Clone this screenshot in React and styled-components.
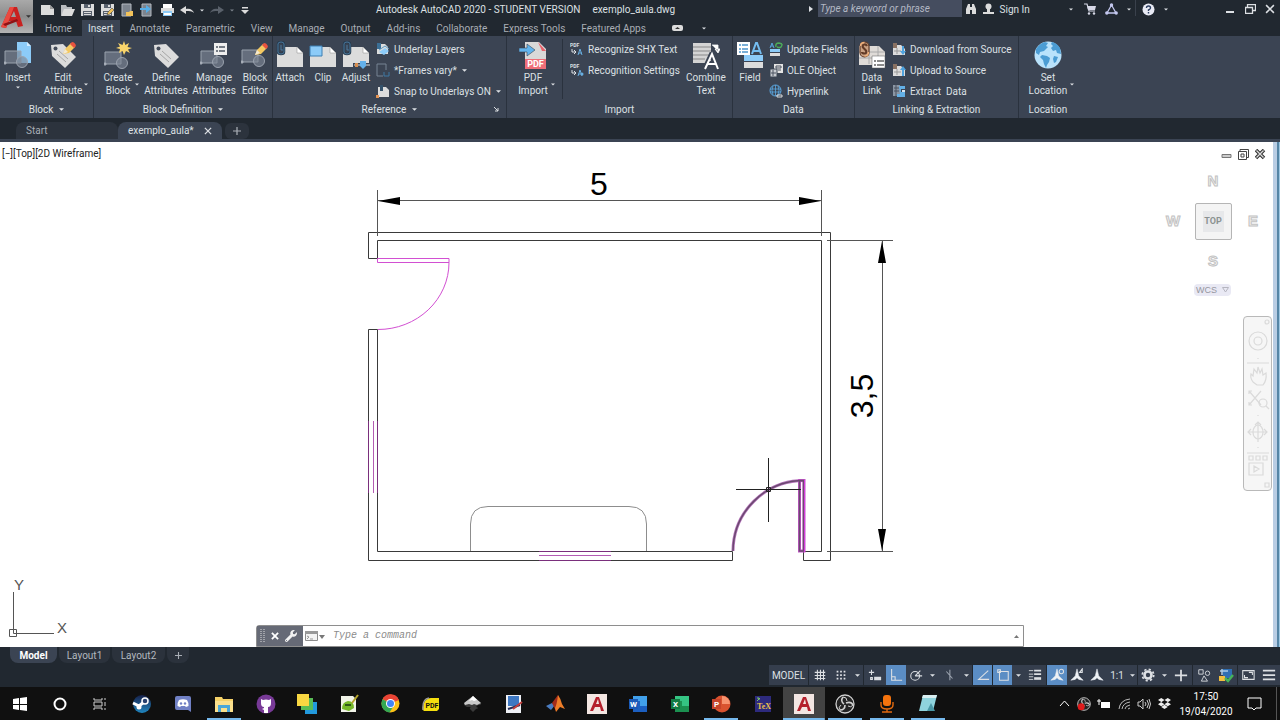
import React from "react";
import styled, { createGlobalStyle, css } from "styled-components";
import { FaGithub, FaDropbox, FaWrench } from "react-icons/fa";

const c = {
  dark: "#212830",
  panel: "#3b4453",
  line: "#2a323e",
  text: "#dde0e4",
  dim: "#a9aeb5",
  grey: "#dcdcdc",
  blue: "#8ccbf8",
  active: "#5b8dc4",
  magenta: "#d24fd2",
};

const GlobalStyle = createGlobalStyle`
  *, *::before, *::after { box-sizing: border-box; }
  body { margin: 0; background: ${c.dark}; }
  button, input { font: inherit; color: inherit; border: 0; padding: 0; margin: 0; background: none; }
  a { color: inherit; text-decoration: none; }
  svg { display: block; flex: none; }
`;

const Shell = styled.div`
  display: flex;
  flex-direction: column;
  min-height: 100vh;
  font-family: Roboto, "Open Sans", sans-serif;
  font-size: 10px;
  line-height: 13px;
  color: ${c.text};
  white-space: nowrap;
`;

/* ---------- header ---------- */
const Header = styled.header`
  display: flex;
  height: 36px;
  background: ${c.dark};
`;
const AppButton = styled.button`
  display: flex;
  align-items: center;
  width: 33px;
  height: 33px;
  background: linear-gradient(#a9a9a9, #8b8b8b 50%, #b4b4b4);
`;
const HeaderRows = styled.div`
  flex: 1;
  display: flex;
  flex-direction: column;
`;
const TitleBar = styled.div`
  display: grid;
  grid-template-columns: 343px 1fr 477px;
  height: 20px;
`;
const QuickAccess = styled.div`
  display: flex;
  align-items: center;
  padding-left: 4px;
`;
const ToolButton = styled.button`
  display: flex;
  align-items: center;
  justify-content: center;
  flex: none;
  width: ${(p) => p.$w || 20}px;
  height: ${(p) => p.$h || 18}px;
`;
const WindowTitle = styled.h1`
  display: flex;
  gap: 12px;
  margin: 0;
  font-size: 10px;
  font-weight: 400;
  line-height: 20px;
`;
const TitleRight = styled.div`
  display: flex;
  justify-content: flex-end;
  align-items: flex-start;
`;
const WindowButtons = styled.div`
  display: flex;
  margin-left: 48px;
`;
const Search = styled.input`
  width: 148px;
  height: 17px;
  padding: 0 2px;
  margin-right: 1px;
  background: #454d5f;
  font-style: italic;
  border-radius: 0;
  &::placeholder { color: #b3b8c4; opacity: 1; }
`;
const SignIn = styled.button`
  display: flex;
  align-items: center;
  gap: 6px;
  height: 18px;
  width: 84px;
  padding-left: 4px;
`;
const Divider = styled.span`
  width: 1px;
  height: 16px;
  background: #3a414c;
`;
const RibbonTabs = styled.nav`
  display: flex;
  height: 16px;
  padding-left: 4px;
`;
const RibbonTab = styled.a`
  padding: 0 8px;
  line-height: 17px;
  color: ${c.dim};
  ${(p) => p.$on && css`
    padding: 0 6px;
    margin: 0 2px;
    background: ${c.panel};
    color: ${c.text};
  `}
`;

/* ---------- ribbon ---------- */
const Ribbon = styled.section`
  display: flex;
  height: 82px;
  background: ${c.panel};
`;
const Panel = styled.section`
  display: flex;
  flex-direction: column;
  flex: ${(p) => (p.$w ? `0 0 ${p.$w}px` : "1")};
  border-right: ${(p) => (p.$w ? `1px solid ${c.line}` : "0")};
`;
const PanelBody = styled.div`
  display: flex;
  height: 66px;
  padding-top: 3px;
`;
const PanelTitle = styled.div`
  display: flex;
  align-items: center;
  justify-content: center;
  gap: 6px;
  height: 17px;
  width: ${(p) => (p.$w ? `${p.$w}px` : "auto")};
`;
const SplitTitle = styled(PanelTitle)`
  display: grid;
  grid-template-columns: 1fr auto auto 1fr;
`;
const Launcher = styled.button`
  justify-self: end;
  width: 12px;
  height: 5px;
`;
const BigBtn = styled.button`
  display: flex;
  flex-direction: column;
  align-items: center;
  flex: none;
  width: ${(p) => p.$w}px;
  line-height: 13px;
  & > svg { margin-top: 2px; }
`;
const BigIcon = styled.span`
  display: grid;
  place-items: center;
  height: 32px;
`;
const BigLabel = styled.span`
  display: grid;
  grid-template-columns: 1fr auto 1fr;
  align-items: center;
  width: 100%;
  text-align: center;
  white-space: pre-line;
  & > span { grid-column: 2; }
  & > svg { justify-self: center; }
`;
const SmallCol = styled.div`
  display: flex;
  flex-direction: column;
  gap: 1px;
  padding-left: ${(p) => p.$pad || 4}px;
`;
const SmallBtn = styled.button`
  display: flex;
  align-items: center;
  gap: 4px;
  height: 20px;
  & > svg:last-child { margin-left: 1px; }
`;
const InnerRule = styled.span`
  width: 1px;
  height: 60px;
  background: ${c.line};
  margin-left: 3px;
`;

/* ---------- document tabs ---------- */
const DocTabs = styled.nav`
  display: flex;
  align-items: flex-end;
  height: 24px;
  padding-left: 16px;
  border-bottom: 3px solid ${c.panel};
`;
const DocTab = styled.a`
  display: flex;
  align-items: center;
  gap: 10px;
  width: ${(p) => p.$w}px;
  height: 17px;
  padding-left: 10px;
  border-radius: 8px 8px 0 0;
  color: ${(p) => (p.$on ? c.text : c.dim)};
  background: ${(p) => (p.$on ? c.panel : "#2c333d")};
`;
const AddTab = styled.button`
  width: 24px;
  height: 16px;
  margin-left: 3px;
  border-radius: 6px;
  background: #2c333d;
  display: grid;
  place-items: center;
`;

/* ---------- drawing area ---------- */
const Canvas = styled.main`
  position: relative;
  flex: 1;
  background: #fff;
  color: #222;
`;
const Drawing = styled.svg`
  width: 100%;
  height: auto;
`;
const ViewLabel = styled.div`
  position: absolute;
  top: 5px;
  left: 2px;
`;
const EdgeStrip = styled.div`
  position: absolute;
  inset: 0 0 0 auto;
  width: 7px;
  background: linear-gradient(90deg, #b9cde4 0 4px, #5585a6 4px 6px, #9cc6e2 6px);
`;
const DocControls = styled.div`
  position: absolute;
  top: 5px;
  right: 12px;
  display: flex;
  gap: 1px;
`;
const ViewCube = styled.div`
  position: absolute;
  top: 19px;
  right: 7px;
  display: grid;
  grid-template: repeat(3, 40px) / repeat(3, 40px);
  place-items: center;
`;
const Compass = styled.button`
  grid-area: ${(p) => p.$area};
  font: 700 15px/18px "Liberation Sans", sans-serif;
  color: #f3f3f3;
  -webkit-text-stroke: 1px #c2c2c2;
`;
const CubeFace = styled.button`
  grid-area: 2 / 2;
  width: 37px;
  height: 37px;
  border: 1px solid #b5b5b5;
  border-radius: 2px;
  background: #f1f1f1;
  box-shadow: inset 0 0 0 7px #f4f4f4, inset 0 0 0 20px #e7e8ea;
  font-weight: 700;
  font-size: 9px;
  color: #8b9291;
`;
const Wcs = styled.button`
  position: absolute;
  top: 142px;
  right: 49px;
  display: flex;
  align-items: center;
  justify-content: center;
  gap: 5px;
  width: 37px;
  height: 12px;
  border-radius: 4px;
  background: #e9e9f4;
  font: 9px/12px "Liberation Sans", sans-serif;
  color: #96969f;
`;
const NavBar = styled.div`
  position: absolute;
  top: 174px;
  right: 8px;
  width: 29px;
  height: 175px;
  border: 1px solid #b9b9b9;
  border-radius: 4px;
  background: #f6f6f6;
`;
const CommandLine = styled.form`
  position: absolute;
  left: 20%;
  bottom: 0;
  width: 60%;
  height: 22px;
  display: flex;
  border: 1px solid #8e8e8e;
  border-radius: 3px 0 0 0;
  background: #fff;
`;
const CommandHandle = styled.div`
  display: flex;
  align-items: center;
  gap: 6px;
  width: 46px;
  padding-left: 3px;
  background: #666a76;
`;
const CommandInput = styled.input`
  flex: 1;
  font: italic 10px/20px "Liberation Mono", monospace;
  padding-left: 6px;
  &::placeholder { color: #8c8c8c; opacity: 1; }
`;
const PlainButton = styled.button`
  display: grid;
  place-items: center;
`;

/* ---------- bottom bars ---------- */
const LayoutTabs = styled.nav`
  display: flex;
  height: 18px;
  padding-left: 10px;
  background: ${c.dark};
`;
const LayoutTab = styled.a`
  display: flex;
  align-items: center;
  justify-content: center;
  width: ${(p) => p.$w}px;
  height: 16px;
  margin-right: 2px;
  border-radius: 0 0 8px 8px;
  color: ${(p) => (p.$on ? "#fff" : "#b3b8bf")};
  font-weight: ${(p) => (p.$on ? 700 : 400)};
  background: ${(p) => (p.$on ? c.panel : "#2b323c")};
`;
const StatusBar = styled.div`
  display: flex;
  justify-content: flex-end;
  gap: 1px;
  height: 22px;
  background: ${c.dark};
`;
const StatusGroup = styled.div`
  display: flex;
  align-items: center;
  height: 20px;
  background: #353e4d;
`;
const StatusBtn = styled.button`
  display: grid;
  place-items: center;
  width: ${(p) => p.$w || 20}px;
  height: 20px;
  color: ${c.text};
  background: ${(p) => (p.$on ? c.active : "transparent")};
`;
const Taskbar = styled.footer`
  display: flex;
  height: 33px;
  background: #101010;
  color: #fff;
`;
const SystemButtons = styled.div`
  display: grid;
  grid-template-columns: repeat(3, 40px);
`;
const Apps = styled.div`
  display: grid;
  grid-template-columns: repeat(20, 1fr);
  flex: 0 1 828px;
  margin-left: 1px;
`;
const TaskBtn = styled.button`
  display: grid;
  place-items: center;
  height: 33px;
  background: ${(p) => (p.$focus ? "#434343" : "transparent")};
  ${(p) => p.$open && css`
    background-image: linear-gradient(#76b9ed, #76b9ed);
    background-size: ${p.$focus ? "100%" : "34px"} 2px;
    background-position: bottom;
    background-repeat: no-repeat;
  `}
`;
const Tray = styled.div`
  display: flex;
  align-items: center;
  margin-left: auto;
`;
const Clock = styled.button`
  width: 64px;
  line-height: 15px;
  text-align: center;
`;
const PeekEdge = styled.span`
  width: 1px;
  height: 33px;
  margin-left: 6px;
  margin-right: 3px;
  background: #555;
`;

/* ---------- icons ---------- */
const Svg = ({ w = 16, h = w, vb, children, ...rest }) => (
  <svg width={w} height={h} viewBox={vb || `0 0 ${w} ${h}`} fill="none" {...rest}>{children}</svg>
);
const Caret = ({ s = 5, color = c.text }) => (
  <Svg w={s} h={3} vb="0 0 6 3"><path d="M0 0h6L3 3z" fill={color} /></Svg>
);
const Close = ({ s = 9, color = c.text, sw = 1.4 }) => (
  <Svg w={s} vb="0 0 9 9"><path d="M1 1l7 7M8 1L1 8" stroke={color} strokeWidth={sw} /></Svg>
);
const Plus = ({ s = 9, sw = 1.4, color = c.dim }) => (
  <Svg w={s} vb="0 0 9 9"><path d="M4.500 0v9M0 4.500h9" stroke={color} strokeWidth={sw} /></Svg>
);
const RedA = () => (
  <Svg w={26} h={24}>
    <path d="M1 22L10 2h7l6 19-5 1-2-6H9l-3 7z" fill="#c9211f" />
    <path d="M10 2h4L6 23l-5-1z" fill="#ea4a40" />
    <path d="M11 12l3-6 2 6z" fill="#9c9c9c" />
    <path d="M3 19l14-5 1 2-13 5z" fill="#8f1215" />
  </Svg>
);
const PageIcon = () => <Svg w={15} h={12}><path d="M1 1h9l4 4v6H1z" fill={c.grey} /><path d="M10 1v4h4z" fill="#9a9a9a" /></Svg>;
const FolderIcon = () => (
  <Svg w={15} h={13}><path d="M1 12V1h5l1 2h5v3H5z" fill="#b9bcc0" /><path d="M4 5h11l-3 7H1z" fill={c.grey} /></Svg>
);
const SaveIcon = ({ pencil }) => (
  <Svg w={15} h={14}>
    <path d="M1 1h13v12H1z" fill={c.grey} />
    <path d="M4 1h7v4H4zM3 8h9v5H3z" fill="#59616d" />
    <path d="M4 9h7v1H4zM4 11h7v1H4zM8 2h2v2H8z" fill={c.grey} />
    {pencil && <path d="M7 12l1-3 4-4 2 2-4 4z" fill="#f2c35b" stroke="#30353d" strokeWidth=".5" />}
  </Svg>
);
const WebFileIcon = ({ out }) => (
  <Svg w={14}>
    <path d="M2 1h9v12H2z" fill="#7c848e" stroke="#b5bac1" />
    {out ? <path d="M0 5h6V2l5 4-5 4V7H0z" fill="#56aee8" /> : <path d="M6 9h3l1-1h3v5H6z" fill="#f2c35b" />}
  </Svg>
);
const PrintIcon = () => (
  <Svg w={15} h={14}>
    <path d="M3 1h9v4H3z" fill="#fff" /><path d="M1 5h13v5H1z" fill={c.grey} /><path d="M3 8h9v5H3z" fill="#8ccbf8" />
    <path d="M4 10h7v2H4z" fill="#fff" />
  </Svg>
);
const UndoIcon = ({ flip, color }) => (
  <Svg w={14} h={10}>
    <path d={flip ? "M14 5L8 1v3c-4-1-7 1-8 4 2-2 5-2 8-2v3z" : "M0 5l6-4v3c4-1 7 1 8 4-2-2-5-2-8-2v3z"} fill={color} />
  </Svg>
);
const Shapes = ({ x = 1, y = 10 }) => (
  <g stroke="#9aa2ae" strokeWidth="1" fill="#7d8694" fillOpacity=".65">
    <path d={`M${x} ${y}h16v12H${x}z`} /><circle cx={x + 17} cy={y + 11} r="5.500" />
    <path d={`M${x - 1} ${y + 11}h2v2h-2z`} fill="#fff" />
  </g>
);
const Pencil = ({ x = 0, y = 0 }) => (
  <g transform={`translate(${x} ${y})`}>
    <path d="M0 12l2-5 6-6 4 4-6 6z" fill="#f4c962" /><path d="M7 2l2-2q3 0 4 4l-2 2z" fill="#e8533f" /><path d="M0 12l2-5 3 3z" fill="#f3e9d2" />
  </g>
);
const Tag = () => (
  <g>
    <path d="M2 4l12-1 13 13-11 11L3 15z" fill={c.grey} /><circle cx="6.500" cy="7.500" r="2" fill="#434b59" />
    <path d="M10 10l9 8M8 13l9 8" stroke="#a5a5a5" />
  </g>
);
const Sheet = () => <g><path d="M1 6h20l6 6v14H1z" fill={c.grey} /><path d="M21 6v6h6z" fill="#fff" stroke="#8b8b8b" strokeWidth=".5" /></g>;
const Clip = () => (
  <g>
    <path d="M2 3q0-2 3-2t3 2v8q0 2-3 2t-3-2z" fill="#3b4453" stroke="#26394c" strokeWidth="2.500" />
    <path d="M2 3q0-2 3-2t3 2v8q0 2-3 2t-3-2zM5 4v5h2" stroke="#4f7fa6" strokeWidth=".9" />
  </g>
);
const InsertI = () => <Svg w={28}><path d="M13 1h10l4 4v17H13z" fill={c.blue} /><path d="M23 1v4h4z" fill="#d5edff" /><Shapes x={1} y={10} /></Svg>;
const EditAttrI = () => <Svg w={28}><Tag /><Pencil x={14} y={1} /></Svg>;
const CreateI = () => (
  <Svg w={28}><Shapes y={11} />
    <path d="M20 0l1.300 4L25 2l-1.500 4L28 7l-4 1.500L26 12l-4-2-2 4-1.500-4L15 12l1-4-4-1 4-1.500L14 2l4.500 2z" fill="#f8d46b" /></Svg>
);
const TagI = () => <Svg w={28}><Tag /></Svg>;
const ManageI = () => (
  <Svg w={28}><Shapes y={10} /><path d="M14 2h13v12H14z" fill="#eee" /><path d="M16 6h2m1 0h6M16 10h2m1 0h6" stroke="#4c5562" strokeWidth="1.500" /></Svg>
);
const EditorI = () => <Svg w={28}><Shapes y={9} /><Pencil x={14} y={2} /></Svg>;
const AttachI = () => <Svg w={28}><Sheet /><Clip /></Svg>;
const ClipI = () => <Svg w={28} h={28}><Sheet /><path d="M1 5h12v10H1z" fill={c.blue} stroke="#3c7fb3" /></Svg>;
const AdjustI = () => (
  <Svg w={28}><Sheet /><Clip /><path d="M11 24h17" stroke="#3b4453" strokeWidth="4" /><path d="M12 24h16" stroke="#dcdcdc" /><path d="M18 20h6v5l-3 3-3-3z" fill="#63b0ea" /><path d="M13 22h3v4h-3z" fill="#d88d4e" /></Svg>
);
const PdfI = () => (
  <Svg w={28} h={29}>
    <path d="M6 1h14l7 7v20H6z" fill="#d9d9d9" /><path d="M19 1l8 9h-4z" fill="#e8626b" /><path d="M6 18h21v10H6z" fill="#ef6e78" />
    <text x="16.500" y="26" fontSize="9" fontWeight="700" textAnchor="middle" fill="#fff">PDF</text>
    <path d="M0 7h8V3l8 6-8 6v-4H0z" fill="#62b4ee" stroke="#3b4453" strokeWidth=".6" />
  </Svg>
);
const CombineI = () => (
  <Svg w={28} h={29}>
    <path d="M1 2h18v20H1z" fill="#d4d4d4" /><path d="M1 6h18M1 10h18M1 14h18M1 18h12" stroke="#888" />
    <path d="M20 4h6v6M23 8l3 4 2-4z" stroke="#fff" fill="#fff" strokeWidth=".8" />
    <path d="M12 28l7-15h2l6 15M15 22h10" stroke="#3b4453" strokeWidth="4" /><path d="M13 28l7-15 6 15M15 23h9" stroke="#fff" strokeWidth="2" />
  </Svg>
);
const FieldI = () => (
  <Svg w={28}>
    <path d="M1 1h13v13H1z" fill="#fff" /><path d="M3 4h2m1 0h6M3 8h2m1 0h6M3 11h2m1 0h6" stroke="#4d95cc" strokeWidth="1.400" />
    <path d="M16 13l4-11h1l4 11M17 10h7" stroke="#74bdf1" strokeWidth="2" /><path d="M8 14h19v6H8z" fill={c.blue} /><path d="M8 21h19v6H8z" fill={c.grey} />
  </Svg>
);
const DataLinkI = () => (
  <Svg w={28}>
    <path d="M1 5h20l6 6v13H1z" fill="#dfdbd7" /><path d="M1 11h26M1 17h14M11 5v18M20 5v12" stroke="#aaa" />
    <path d="M14 15h13v12H14z" fill="#fff" stroke="#555" strokeWidth=".5" /><path d="M16 20h2m1 0h7M16 24h2m1 0h7" stroke="#666" strokeWidth="1.300" />
    <rect x="2" y="1" width="9" height="15" rx="4.500" fill="#c9a183" stroke="#633b26" strokeWidth="1.200" />
    <path d="M9 5q-1-2-3-1.500t-1 3l3 3q1 3-1.500 3T4 11" stroke="#633b26" strokeWidth="2.200" />
    <path d="M2.500 5q0-3.500 4-3.500M10.500 11q0 4-4 4" stroke="#f0b07a" strokeWidth="1.400" />
  </Svg>
);
const GlobeI = () => (
  <Svg w={28}>
    <circle cx="14" cy="14" r="13.500" fill="#b9e2fb" />
    <path d="M2 8q4-6 9-7l3 1-2 3 2 1-4 4-4 1-1 3-3-2zM18 1q5 1 8 6l1 6-4-1-1-3-3 1-2-3 2-2-2-2zM8 14l5 1 3 2-1 4-2 3-1 3-2-4-1-4-3-3zM20 15l4 1-2 5-2 1-1-4z" fill="#4b9cd3" />
  </Svg>
);
const LayersI = () => <Svg w={14}><path d="M1 2h8l3 3v7H1z" fill={c.grey} /><path d="M1 1h4v6H1z" fill="#3b6f96" /><path d="M3 10l6-4 4 3-5 4z" fill={c.blue} /><path d="M3 8l6-4 4 3" stroke="#5a9ac5" /></Svg>;
const FramesI = () => <Svg w={14}><path d="M10 7V1H1v12h6" stroke="#778394" /><path d="M8 9v4h5V9" stroke="#3f79a5" /></Svg>;
const SnapI = () => <Svg w={14}><path d="M2 3h8l3 3v7H2z" fill={c.grey} /><path d="M4 1h3v6H4z" fill="#35526b" /><path d="M0 11h3v3H0z" fill="#e59352" /></Svg>;
const ShxI = ({ gear }) => (
  <Svg w={14}><text x="0" y="5" fontSize="5" fontWeight="700" fill={c.text}>PDF</text>
    <path d="M2 7v3h4M4 8l2 2-2 2" stroke={c.text} />
    <path d="M8 13l2-6 2 6M9 11h3" stroke="#68aee0" />{gear && <circle cx="12" cy="11" r="1.500" fill="#68aee0" />}</Svg>
);
const UpdateI = () => <Svg w={14}><path d="M1 6l2-5 2 5M2 4h2" stroke="#58a5dd" /><path d="M1 7h10v3H1z" fill={c.blue} /><path d="M1 11h10v3H1z" fill={c.grey} /><path d="M7 5q-1-4 3-4l3 1M13 2q0 5-5 3" stroke="#4cac5a" strokeWidth="1.500" /></Svg>;
const OleI = () => <Svg w={14}><path d="M5 1h9v9H5z" fill="#e4e4e4" /><path d="M1 6h7v8H1z" fill="#c6cad0" stroke="#3b4453" /><path d="M7 3h5v2H7zM9 7h3" stroke="#4a5361" /><path d="M2 10h5M4 7v6" stroke="#4a5361" /></Svg>;
const HyperI = () => <Svg w={14}><circle cx="6.500" cy="6.500" r="5.500" stroke="#5ba9e3" /><path d="M1 5h11M1 8h11M6.500 1v11M4 2q-2 4 0 9M9 2q2 4 0 9" stroke="#5ba9e3" strokeWidth=".8" /><path d="M8 11h5v2H8z" stroke={c.grey} /></Svg>;
const TransferI = ({ up }) => (
  <Svg w={14}><path d="M1 3h8l4 4v6H1z" fill={c.grey} /><path d="M1 1h4v5H1z" fill="#8a7263" /><path d="M2 9h7M5 6v6" stroke="#999" />
    <path d={up ? "M10 13V7H8l3-4 3 4h-2v6z" : "M10 4h2v5h2l-3 4-3-4h2z"} fill="#4fa3de" /></Svg>
);
const ExtractI = () => <Svg w={14}><path d="M1 1h7v11H1z" fill="#8b96a4" /><path d="M2 4h5M2 7h5M4 1v11" stroke="#4a5361" /><path d="M7 2h6v3H9v3h4v5H5v-3h3z" fill="#63b0e6" /><path d="M10 6h3v2h-3z" fill="#dce6ef" /></Svg>;

const Binoculars = () => <Svg w={12} h={12}><path d="M1 11V6l2-5h2v10zM7 1h2l2 5v5H7zM4 4h4v3H4z" fill={c.grey} /></Svg>;
const User = () => <Svg w={11} h={12}><circle cx="5.500" cy="3.500" r="3" fill={c.grey} /><path d="M4 5h3v4h4v2H0V9h4z" fill={c.grey} /></Svg>;
const Cart = () => <Svg w={13} h={12}><path d="M0 1h3l2 7h6" stroke="#d6d8e6" strokeWidth="1.200" /><path d="M3 3h9l-1 4H4z" fill="#d6d8e6" /><circle cx="5" cy="10.500" r="1.200" fill="#d6d8e6" /><circle cx="10" cy="10.500" r="1.200" fill="#d6d8e6" /></Svg>;
const Triad = () => <Svg w={13} h={12}><path d="M6.500 2L2 10h9z" stroke="#c4c8ef" strokeWidth="1.300" /><circle cx="6.500" cy="2" r="1.700" fill="#c4c8ef" /><circle cx="1.800" cy="10" r="1.700" fill="#c4c8ef" /><circle cx="11.200" cy="10" r="1.700" fill="#c4c8ef" /></Svg>;
const Help = () => <Svg w={13}><circle cx="6.500" cy="6.500" r="6" fill="#e8eaf4" /><path d="M4.500 5q0-2 2-2t2 2q0 1-2 2v1M6.500 9v1.500" stroke="#2b3c5f" strokeWidth="1.400" /></Svg>;

/* status bar glyphs, drawn on a 16 x 16 grid */
const statusPaths = {
  grid: <path d="M5 2v12M8.500 2v12M12 2v12M2 5h12M2 8.500h12M2 12h12" />,
  snap: <path d="M3 4h2M7 4h2M11 4h2M3 8h2M7 8h2M11 8h2M3 12h2M7 12h2M11 12h2" strokeWidth="2" />,
  infer: <g><path d="M4 2v6M1 5h6" /><path d="M7 10h8v4H7z" fill="#dde0e4" stroke="none" /><path d="M3 11h2v2H3z" /></g>,
  ortho: <path d="M3 1v13h12M3 10h4v4" />,
  polar: <g><circle cx="7" cy="9" r="5" /><path d="M7 9h8M7 9l6-6" /></g>,
  iso: <path d="M9 2v12M5 4l7 8" stroke="#9da5b1" />,
  track: <path d="M14 3L3 13h12" />,
  osnap: <path d="M4 4h10v10H4zM2 2h3v3H2z" />,
  weight: <g><path d="M1 3h5M1 7h5M1 10h5M1 13h5" strokeWidth="1" /><path d="M7 3h8M7 7h8" strokeWidth="2" /><path d="M7 12h8" strokeWidth="3" /></g>,
  anno: <path d="M8 1l2 8 5 5-5-1-2-2-2 2-5 1 5-5z" fill="#eef1f5" stroke="#eef1f5" strokeWidth=".6" />,
  custom: <path d="M8 2v13M1 8.500h14" strokeWidth="2" />,
  shapes: <g><path d="M2 2h5v5H2zM8 9l4 6H5z" strokeWidth="1" /><circle cx="12" cy="6" r="2.500" strokeWidth="1" /></g>,
  full: <path d="M2 3h13v10H2zM9 5h4v3M8 11H4V8" strokeWidth="1.200" />,
  menu: <path d="M1 3h14M1 8h14M1 13h14" strokeWidth="2" />,
};
const SI = ({ n, children }) => <Svg w={14} vb="0 0 16 16" stroke={c.text} strokeWidth="1.200">{statusPaths[n]}{children}</Svg>;
const Gear = () => (
  <Svg w={14} vb="0 0 16 16"><circle cx="8" cy="8" r="4" stroke={c.text} strokeWidth="3" /><circle cx="8" cy="8" r="6.500" stroke={c.text} strokeWidth="2" strokeDasharray="2.500 2.600" /></Svg>
);
const Performance = () => (
  <Svg w={16}><path d="M5 2h9v9H5z" fill="#2f6fb3" /><path d="M2 4h8M4 2v6" stroke="#a9cbe9" strokeWidth="1.500" /><path d="M1 9h6v5H1z" fill="#f2bf3e" /><path d="M7 11l3 3 5-6" stroke="#46b35a" strokeWidth="2.500" /></Svg>
);

/* taskbar glyphs */
const WindowsI = () => <Svg w={14}><path d="M0 2l6-1v6H0zM7 1l7-1v7H7zM0 8h6v5l-6-1zM7 8h7v6l-7-1z" fill="#fff" /></Svg>;
const CortanaI = () => <Svg w={14}><circle cx="7" cy="7" r="5.500" stroke="#fff" strokeWidth="2" /></Svg>;
const TaskViewI = () => <Svg w={14}><path d="M1 1v2h8V1M1 13v-2h8v2M1 5h8v4H1zM12 1v2M12 11v2M12 5v4" stroke="#cfcfcf" /></Svg>;
const SteamI = () => (
  <Svg w={20}><defs><linearGradient id="steam" x2="0" y2="1"><stop stopColor="#17204a" /><stop offset="1" stopColor="#1f86c0" /></linearGradient></defs>
    <circle cx="10" cy="10" r="9" fill="url(#steam)" /><path d="M1 9l6 3 5-4" stroke="#fff" strokeWidth="3" /><circle cx="13" cy="7" r="3" fill="#27406e" stroke="#fff" strokeWidth="1.500" /><circle cx="7" cy="13" r="2.500" fill="#fff" /></Svg>
);
const DiscordI = () => (
  <Svg w={18}><path d="M3 1h12q2 0 2 2v14l-3-2H3q-2 0-2-2V3q0-2 2-2z" fill="#7080c4" />
    <path d="M5 5q4-1.500 8 0 2 3 1.500 6L12 12l-1-1H7l-1 1-2.500-1Q3 8 5 5z" fill="#fff" /><circle cx="7" cy="8.500" r="1.200" fill="#7080c4" /><circle cx="11" cy="8.500" r="1.200" fill="#7080c4" /></Svg>
);
const ExplorerI = () => <Svg w={20}><path d="M1 3h7l1 2h10v13H1z" fill="#f5d168" /><path d="M1 7h18v11H1z" fill="#fbe08c" /><path d="M4 18v-7h12v7h-3v-4H7v4z" fill="#4aa7d8" /></Svg>;
const GithubDesktopI = () => <Svg w={20}><circle cx="10" cy="10" r="9.500" fill="#783a97" /><circle cx="10" cy="10" r="6.500" fill="#783a97" /><path d="M5 5l2 1q3-1 6 0l2-1v4q0 4-3 4v6H8v-3l-2-1 2-1v-1Q5 13 5 9z" fill="#fff" /></Svg>;
const LayersAppI = () => <Svg w={22}><path d="M9 9h12v12H9z" fill="#2299dc" /><path d="M5 5h12v12H5z" fill="#58bd55" /><path d="M1 1h12v12H1z" fill="#f8d742" /></Svg>;
const NotepadI = () => <Svg w={20}><path d="M2 2h12l3 3v13H2z" fill="#f1f3e8" /><path d="M3 15q0-7 6-8 6 0 6 7l-5 3z" fill="#76b82a" /><path d="M6 10h6v2H6z" fill="#2f5818" /><path d="M13 9l6-8" stroke="#b4a32b" strokeWidth="2" /></Svg>;
const ChromeI = () => (
  <Svg w={19}><circle cx="9.500" cy="9.500" r="9" fill="#fbc116" /><path d="M9.500 9.500L1.500 5.200A9 9 0 0 1 18 6z" fill="#ea4335" /><path d="M9.500 9.500L1.500 5.200A9 9 0 0 0 8.500 18.500L12 13z" fill="#34a853" />
    <circle cx="9.500" cy="9.500" r="4.500" fill="#fff" /><circle cx="9.500" cy="9.500" r="3.500" fill="#4285f4" /></Svg>
);
const PdfAppI = () => (
  <Svg w={18} h={16}><path d="M1 14Q1 2 9 2h8v11l-2 2H2z" fill="#f5df0e" /><path d="M1 14Q0 3 7 2" stroke="#999" strokeWidth="1.500" /><text x="10" y="12" fontSize="7" fontWeight="700" textAnchor="middle" fill="#111">PDF</text></Svg>
);
const InkscapeI = () => (
  <Svg w={20}><path d="M10 2l8 7q1 2-3 2l-2 2q4 1 0 2l-3 3-3-3q-1-1 1-2H4q-3-1-3-3z" fill="#3a3a3a" /><path d="M10 2l8 7-4 2-3-1-2 1-3-1-4 1-1-2z" fill="#c9c9c9" /><path d="M10 2l4 4-3 1-2-1-3 1z" fill="#fff" /></Svg>
);
const PenAppI = () => <Svg w={20}><path d="M2 1h15v18H2z" fill="#eef0f5" /><path d="M4 2h11v10H4z" fill="#3e78c3" /><path d="M4 15l12-4" stroke="#222b56" strokeWidth="2" /><path d="M9 15l9-7" stroke="#c3403e" strokeWidth="2" /></Svg>;
const MatlabI = () => <Svg w={20}><path d="M0 12l6-3 3 2-4 5z" fill="#4a7cc0" /><path d="M6 9l6-8 2 9-4 7z" fill="#a22b1a" /><path d="M12 1q3 4 4 9l3 5-5-2-4 5-1-4q2-4 3-13z" fill="#ee7d28" /></Svg>;
const AutocadAppI = () => <Svg w={20}><path d="M0 0h20v20H0z" fill="#f3e6e2" /><path d="M3 17L9 3h3l5 14h-3l-1-4H8l-2 4zM9 10h3l-1-5z" fill="#b4202c" fillRule="evenodd" /></Svg>;
const OfficeI = ({ base, mid, light, letter, round }) => (
  <Svg w={20}>{round ? <circle cx="11" cy="10" r="8.500" fill={mid} /> : <path d="M5 2h14v16H5z" fill={mid} />}
    <path d={round ? "M11 2a8 8 0 0 1 8 8h-8z" : "M5 2h14v5H5zM12 7h7v5h-7z"} fill={light} />
    <path d="M1 5h9v10H1z" fill={base} /><text x="5.500" y="13" fontSize="8" fontWeight="700" textAnchor="middle" fill="#fff">{letter}</text></Svg>
);
const TexI = () => <Svg w={18}><path d="M1 1h16v16H1z" fill="#2d2a7d" /><path d="M3 6l3-3M3 3h2v2" stroke="#7cc46a" /><text x="10" y="14" fontSize="8" fontWeight="700" textAnchor="middle" fill="#e8c04c" fontFamily="Liberation Serif, serif">TeX</text></Svg>;
const ObsI = ({ s = 20, rec }) => (
  <Svg w={s} vb="0 0 20 20"><circle cx="10" cy="10" r="9" fill="#242424" stroke="#d0d0d0" strokeWidth="1.300" />
    <path d="M9 10q-4-3-1-7M11 9q5-2 7 2M10 11q0 5-5 5" stroke="#d0d0d0" strokeWidth="1.600" />
    <path d="M8 3q4 0 4 4M18 11q-2 3-5 1M5 16q-2-3 1-5" stroke="#d0d0d0" strokeWidth="1" />
    {rec && <circle cx="6" cy="14" r="5" fill="#e01b1b" />}</Svg>
);
const MicI = () => <Svg w={18} h={20}><rect x="5" y="1" width="8" height="11" rx="3" fill="#f5730d" /><path d="M3 8v3q0 4 6 4t6-4V8M9 15v3M4 18h10" stroke="#e26a10" strokeWidth="1.400" /></Svg>;
const NotesI = () => <Svg w={20}><path d="M5 1h14l-4 16H1z" fill="#8fd3dd" /><path d="M5 1h14l-1 3H4z" fill="#d9eef0" /><path d="M13 9l4 8H9z" fill="#4a98a6" /></Svg>;

/* ---------- content data ---------- */
const quick = [
  ["New", <PageIcon />], ["Open", <FolderIcon />], ["Save", <SaveIcon />], ["Save as", <SaveIcon pencil />],
  ["Open web", <WebFileIcon />], ["Save web", <WebFileIcon out />], ["Plot", <PrintIcon />],
];
const tabs = ["Home", "Insert", "Annotate", "Parametric", "View", "Manage", "Output", "Add-ins", "Collaborate", "Express Tools", "Featured Apps"];
const taskApps = [
  ["Steam", <SteamI />], ["Discord", <DiscordI />], ["Explorer", <ExplorerI />, "open"], ["GitHub", <GithubDesktopI />], ["Layers", <LayersAppI />],
  ["Notepad", <NotepadI />], ["Chrome", <ChromeI />], ["PDF reader", <PdfAppI />], ["Inkscape", <InkscapeI />], ["Notes", <PenAppI />],
  ["Matlab", <MatlabI />], ["AutoCAD launcher", <AutocadAppI />], ["Word", <OfficeI base="#1b5ab7" mid="#1c5fc0" light="#41a0ea" letter="W" />],
  ["Excel", <OfficeI base="#127a42" mid="#1b9050" light="#35c483" letter="X" />],
  ["PowerPoint", <OfficeI base="#c6432a" mid="#d9522f" light="#f7936f" letter="P" round />, "open"], ["TeX", <TexI />],
  ["AutoCAD", <AutocadAppI />, "focus"], ["OBS", <ObsI />, "open"], ["Recorder", <MicI />, "open"], ["Sticky notes", <NotesI />, "open"],
];

const Big = ({ w, icon, label, caret, below }) => (
  <BigBtn $w={w}>
    <BigIcon>{icon}</BigIcon>
    <BigLabel><span>{label}</span>{caret && <Caret s={4} />}</BigLabel>
    {below && <Caret s={4} />}
  </BigBtn>
);
const Small = ({ icon, label, caret }) => <SmallBtn>{icon}<span>{label}</span>{caret && <Caret />}</SmallBtn>;
const Status = ({ n, on, w, children }) => <StatusBtn $on={on} $w={w} aria-label={n}>{children || <SI n={n} />}</StatusBtn>;
const Drop = () => <StatusBtn $w={12} aria-label="More"><Caret /></StatusBtn>;

const FloorPlan = () => (
  <Drawing viewBox="0 142 1280 505" fill="none" stroke="#3a3a3a" strokeWidth="1">
    <path d="M368.500 258.500V232.500H830.500V560.500H803.500V551.500H821.500V240.500H377.500V258.500z" />
    <path d="M368.500 329.500H377.500V551.500H732.500V560.500H368.500z" />
    <path d="M470.500 551V524Q470.500 506.500 488 506.500H629Q646.500 506.500 646.500 524V551" stroke="#8d8d8d" />
    <path d="M377.500 190V236M821.500 190V236M378 200.500H821M827 240.500H893M827 551.500H893M882.500 241V551" stroke="#555" />
    <path d="M378 201l22-4v8zM821 201l-22-4v8zM882 241l-4 22h8zM882 551l-4-22h8z" fill="#000" stroke="none" />
    <g fontFamily="Liberation Sans, sans-serif" fontSize="32" fill="#000" stroke="none" textAnchor="middle">
      <text x="599" y="195">5</text>
      <text transform="translate(873 396) rotate(-90)">3,5</text>
    </g>
    <g stroke={c.magenta}>
      <path d="M377.500 258.500H449V262.500H377.500zM449 262.500A71 67 0 0 1 378 329.500" />
      <path d="M373.500 421V493M539 555.500H611" stroke="#b45cb4" />
      <path d="M368.500 421V493M377.500 421V493M539 551.500H611M539 560.500H611" stroke="#7a2f7c" />
      <path d="M733 551A71 71 0 0 1 804 480.500" stroke="#b574bb" strokeWidth="3" />
      <path d="M799.500 480.500H804V551H799.500z" stroke="#c556ca" strokeWidth="3" />
      <path d="M733 551A71 71 0 0 1 804 480.500M799.500 480.500H803.500V551H799.500z" stroke="#6b4a70" strokeWidth="1.500" />
      <path d="M804.500 480V552" stroke="#d63bdc" />
    </g>
    <path d="M768.500 458V522M736 489.500H801" stroke="#222" />
    <path d="M766.500 487.500h4v4h-4z" stroke="#222" />
    <path d="M13.500 592V633.500H54M9.500 629.500h7v7h-7z" stroke="#555" />
    <g fontFamily="Liberation Sans, sans-serif" fontSize="15" fill="#555" stroke="none" textAnchor="middle">
      <text x="19" y="590">Y</text>
      <text x="62" y="633">X</text>
    </g>
  </Drawing>
);

export default function App() {
  return (
    <Shell>
      <GlobalStyle />
      <Header>
        <AppButton aria-label="Application menu"><RedA /><Caret color="#333" /></AppButton>
        <HeaderRows>
          <TitleBar>
            <QuickAccess>
              {quick.map(([name, icon]) => <ToolButton key={name} aria-label={name}>{icon}</ToolButton>)}
              <ToolButton aria-label="Undo"><UndoIcon color={c.grey} /></ToolButton>
              <ToolButton $w={10} aria-label="Undo list"><Caret s={4} /></ToolButton>
              <ToolButton aria-label="Redo"><UndoIcon flip color="#5a616b" /></ToolButton>
              <ToolButton $w={10} aria-label="Redo list"><Caret s={4} color="#7c828b" /></ToolButton>
              <ToolButton $w={15} aria-label="Customize">
                <Svg w={8} h={7}><path d="M1 0h6v1.500H1zM0 3h8L4 7z" fill={c.grey} /></Svg>
              </ToolButton>
            </QuickAccess>
            <WindowTitle><span>Autodesk AutoCAD 2020 - STUDENT VERSION</span><span>exemplo_aula.dwg</span></WindowTitle>
            <TitleRight>
              <ToolButton $w={15} aria-label="Collapse search"><Svg w={4} h={6}><path d="M0 0v6l4-3z" fill={c.text} /></Svg></ToolButton>
              <Search aria-label="Search" placeholder="Type a keyword or phrase" />
              <ToolButton $w={16} aria-label="Find"><Binoculars /></ToolButton>
              <SignIn><User />Sign In</SignIn>
              <ToolButton $w={22} aria-label="Account"><Caret s={4} /></ToolButton>
              <ToolButton $w={17} aria-label="Cart"><Cart /></ToolButton>
              <ToolButton $w={24} aria-label="App store"><Triad /></ToolButton>
              <ToolButton $w={12} aria-label="Store list"><Caret s={4} /></ToolButton>
              <Divider />
              <ToolButton $w={24} aria-label="Help"><Help /></ToolButton>
              <ToolButton $w={12} aria-label="Help list"><Caret s={4} /></ToolButton>
              <WindowButtons>
                <ToolButton aria-label="Minimize"><Svg w={8} h={10}><path d="M0 7h8v2H0z" fill={c.text} /></Svg></ToolButton>
                <ToolButton aria-label="Restore"><Svg w={11} h={10} stroke={c.text}><path d="M.5 3.500h7v6h-7zM2.500 3V.5h8v6H8" strokeWidth="1.300" /></Svg></ToolButton>
                <ToolButton aria-label="Close"><Close s={10} /></ToolButton>
              </WindowButtons>
            </TitleRight>
          </TitleBar>
          <RibbonTabs>
            {tabs.map((t) => <RibbonTab key={t} href="#" $on={t === "Insert"}>{t}</RibbonTab>)}
            <ToolButton $w={48} $h={16} aria-label="Ribbon state"><Svg w={11} h={6}><rect width="11" height="6" rx="2" fill={c.grey} /><path d="M3 4l2.500-2L8 4z" fill="#333" /></Svg></ToolButton>
            <ToolButton $w={4} $h={16} aria-label="Ribbon list"><Caret s={4} /></ToolButton>
          </RibbonTabs>
        </HeaderRows>
      </Header>

      <Ribbon>
        <Panel $w={94}>
          <PanelBody>
            <Big w={36} icon={<InsertI />} label="Insert" below />
            <Big w={54} icon={<EditAttrI />} label={"Edit\nAttribute"} caret />
          </PanelBody>
          <PanelTitle>Block <Caret /></PanelTitle>
        </Panel>
        <Panel $w={179}>
          <PanelBody>
            <Big w={48} icon={<CreateI />} label={"Create\nBlock"} caret />
            <Big w={48} icon={<TagI />} label={"Define\nAttributes"} />
            <Big w={48} icon={<ManageI />} label={"Manage\nAttributes"} />
            <Big w={34} icon={<EditorI />} label={"Block\nEditor"} />
          </PanelBody>
          <PanelTitle>Block Definition <Caret /></PanelTitle>
        </Panel>
        <Panel $w={234}>
          <PanelBody>
            <Big w={34} icon={<AttachI />} label="Attach" />
            <Big w={32} icon={<ClipI />} label="Clip" />
            <Big w={34} icon={<AdjustI />} label="Adjust" />
            <SmallCol $pad={3}>
              <Small icon={<LayersI />} label="Underlay Layers" />
              <Small icon={<FramesI />} label="*Frames vary*" caret />
              <Small icon={<SnapI />} label="Snap to Underlays ON" caret />
            </SmallCol>
          </PanelBody>
          <SplitTitle>
            <span />Reference <Caret />
            <Launcher aria-label="Reference settings"><Svg w={5}><path d="M0 0l4 4M4 1v3H1" stroke={c.text} /></Svg></Launcher>
          </SplitTitle>
        </Panel>
        <Panel $w={225}>
          <PanelBody>
            <Big w={52} icon={<PdfI />} label={"PDF\nImport"} caret />
            <InnerRule />
            <SmallCol $pad={7}>
              <Small icon={<ShxI />} label="Recognize SHX Text" />
              <Small icon={<ShxI gear />} label="Recognition Settings" />
            </SmallCol>
            <Big w={52} icon={<CombineI />} label={"Combine\nText"} />
          </PanelBody>
          <PanelTitle>Import</PanelTitle>
        </Panel>
        <Panel $w={122}>
          <PanelBody>
            <Big w={34} icon={<FieldI />} label="Field" />
            <SmallCol $pad={2}>
              <Small icon={<UpdateI />} label="Update Fields" />
              <Small icon={<OleI />} label="OLE Object" />
              <Small icon={<HyperI />} label="Hyperlink" />
            </SmallCol>
          </PanelBody>
          <PanelTitle>Data</PanelTitle>
        </Panel>
        <Panel $w={164}>
          <PanelBody>
            <Big w={34} icon={<DataLinkI />} label={"Data\nLink"} />
            <SmallCol $pad={3}>
              <Small icon={<TransferI />} label="Download from Source" />
              <Small icon={<TransferI up />} label="Upload to Source" />
              <Small icon={<ExtractI />} label={<>Extract&nbsp; Data</>} />
            </SmallCol>
          </PanelBody>
          <PanelTitle>{"Linking & Extraction"}</PanelTitle>
        </Panel>
        <Panel>
          <PanelBody>
            <Big w={58} icon={<GlobeI />} label={"Set\nLocation"} caret />
          </PanelBody>
          <PanelTitle $w={58}>Location</PanelTitle>
        </Panel>
      </Ribbon>

      <DocTabs>
        <DocTab href="#" $w={102}>Start</DocTab>
        <DocTab href="#" $w={104} $on>exemplo_aula* <Close s={8} /></DocTab>
        <AddTab aria-label="New tab"><Plus s={8} /></AddTab>
      </DocTabs>

      <Canvas>
        <FloorPlan />
        <ViewLabel>[−][Top][2D Wireframe]</ViewLabel>
        <EdgeStrip />
        <DocControls>
          <ToolButton $w={16} $h={14} aria-label="Minimize view"><Svg w={11} h={10}><path d="M1 5.500h9v3H1z" fill="#ccc" stroke="#777" /></Svg></ToolButton>
          <ToolButton $w={16} $h={14} aria-label="Restore view"><Svg w={11} stroke="#444"><path d="M.5 2.500h8v8h-8zM2 2V.5h8.500v8H9M3 5h3v3H3z" /></Svg></ToolButton>
          <ToolButton $w={16} $h={14} aria-label="Close view"><Svg w={11}><path d="M1 1l8 8M9 1L1 9" stroke="#333" strokeWidth="3.500" /><path d="M1.500 1.500l7 7M8.500 1.500l-7 7" stroke="#ddd" strokeWidth="1.300" /></Svg></ToolButton>
        </DocControls>
        <ViewCube>
          <Compass $area="1 / 2">N</Compass>
          <Compass $area="2 / 1">W</Compass>
          <CubeFace>TOP</CubeFace>
          <Compass $area="2 / 3">E</Compass>
          <Compass $area="3 / 2">S</Compass>
        </ViewCube>
        <Wcs>WCS<Svg w={7} h={6}><path d="M.5.500h6L3.500 5z" stroke="#b5b5bf" /></Svg></Wcs>
        <NavBar>
          <Svg w={27} h={173} stroke="#dadada" strokeWidth="1.200">
            <circle cx="23" cy="5" r="2" /><circle cx="14" cy="24" r="9" /><circle cx="14" cy="24" r="4" />
            <path d="M3 46h22M3 136h22M14 41v1M14 98v1M14 130v1" />
            <path d="M7 57q-1 4 2 8l4 3h6q4-5 3-12l-3 2-1-6-2 4-2-6-1 6-3-4-1 7z" />
            <path d="M5 74l12 14M17 74L5 88M5 77v-3h3M5 85v3h3" /><circle cx="19" cy="86" r="4" /><path d="M22 89l3 3" />
            <path d="M14 105v20M4 115h19M11 108l3-3 3 3M7 112l-3 3 3 3M20 112l3 3-3 3" /><ellipse cx="14" cy="115" rx="5" ry="7" />
            <path d="M5 139h4v4H5zM12 139h4v4h-4zM19 139h4v4h-4zM5 146h14v12H5zM10 149l5 3-5 3zM21 166h4v4h-4z" />
          </Svg>
        </NavBar>
        <CommandLine onSubmit={(e) => e.preventDefault()}>
          <CommandHandle>
            <Svg w={5} h={14}><path d="M1 0v14M4 0v14" stroke="#ddd" strokeDasharray="1 1" /></Svg>
            <PlainButton type="button" aria-label="Close command line"><Close s={8} color="#fff" sw={2} /></PlainButton>
            <PlainButton type="button" aria-label="Customize command line"><FaWrench size={12} color="#f2f2f2" /></PlainButton>
          </CommandHandle>
          <ToolButton $w={24} $h={20} type="button" aria-label="Recent commands">
            <Svg w={20} h={10}><path d="M.5.500h12v9H.5z" stroke="#8c8c8c" fill="#f4f4f4" /><path d="M0 0h13v3H0z" fill="#999" /><path d="M2 5l2 1-2 2M5 8h3" stroke="#999" /><path d="M14 4h6l-3 4z" fill="#777" /></Svg>
          </ToolButton>
          <CommandInput aria-label="Command" placeholder="Type a command" />
          <ToolButton $w={14} $h={20} type="button" aria-label="Command history"><Svg w={5} h={3}><path d="M0 3h5L2.500 0z" fill="#777" /></Svg></ToolButton>
        </CommandLine>
      </Canvas>

      <LayoutTabs>
        <LayoutTab href="#" $w={47} $on>Model</LayoutTab>
        <LayoutTab href="#" $w={51}>Layout1</LayoutTab>
        <LayoutTab href="#" $w={53}>Layout2</LayoutTab>
        <LayoutTab as="button" $w={22} aria-label="New layout"><Plus s={7} /></LayoutTab>
      </LayoutTabs>
      <StatusBar>
        <StatusGroup><StatusBtn $w={39}>MODEL</StatusBtn></StatusGroup>
        <StatusGroup><Status n="grid" w={22} /><Status n="snap" /><Drop /></StatusGroup>
        <StatusGroup><Status n="infer" w={22} /><Status n="ortho" on /><Status n="polar" /><Drop /><Status n="iso" w={22} /><Drop /></StatusGroup>
        <StatusGroup><Status n="track" on w={19} /></StatusGroup>
        <StatusGroup><Status n="osnap" on w={19} /><Drop /><Status n="weight" w={22} /></StatusGroup>
        <StatusGroup>
          <Status n="anno" on><SI n="anno"><circle cx="13" cy="4" r="2.500" /></SI></Status>
          <Status n="annoScale"><SI n="anno"><path d="M11 5l3-4v4z" /></SI></Status>
          <Status n="anno" />
          <StatusBtn $w={20}>1:1</StatusBtn><StatusBtn $w={10} aria-label="Scale list"><Caret /></StatusBtn>
        </StatusGroup>
        <StatusGroup><Status n="gear"><Gear /></Status><Drop /><Status n="custom" w={22} /></StatusGroup>
        <StatusGroup><Status n="shapes" w={22} /><Status n="performance" w={22}><Performance /></Status></StatusGroup>
        <StatusGroup><Status n="full" /><Status n="menu" w={22} /></StatusGroup>
      </StatusBar>
      <Taskbar>
        <SystemButtons>
          <TaskBtn aria-label="Start menu"><WindowsI /></TaskBtn>
          <TaskBtn aria-label="Cortana"><CortanaI /></TaskBtn>
          <TaskBtn aria-label="Task view"><TaskViewI /></TaskBtn>
        </SystemButtons>
        <Apps>
          {taskApps.map(([name, icon, state]) => (
            <TaskBtn key={name} aria-label={name} $open={!!state} $focus={state === "focus"}>{icon}</TaskBtn>
          ))}
        </Apps>
        <Tray>
          <ToolButton aria-label="Hidden icons"><Svg w={11} h={7}><path d="M1 6l4.500-5L10 6" stroke="#fff" /></Svg></ToolButton>
          <ToolButton aria-label="Recording"><ObsI s={14} rec /></ToolButton>
          <ToolButton aria-label="Battery"><Svg w={14} h={10}><path d="M4 3h9v6H4z" fill="#fff" /><path d="M0 2h4M2 0v6" stroke="#fff" /></Svg></ToolButton>
          <ToolButton aria-label="Network"><Svg w={13} h={12} stroke="#bbb"><path d="M1 11Q2 2 12 1M4 11q1-6 8-7M7 11q0-3 5-4M10 11l2-1" /></Svg></ToolButton>
          <ToolButton aria-label="Volume"><Svg w={14} h={12} stroke="#ccc"><path d="M1 4h2l3-3v10L3 8H1zM8 4q2 2 0 4M10 2q3 4 0 8M12 1q3 5 0 10" /></Svg></ToolButton>
          <ToolButton aria-label="Dropbox"><FaDropbox size={13} color="#eee" /></ToolButton>
          <Clock>17:50<br />19/04/2020</Clock>
          <ToolButton $w={32} $h={20} aria-label="Notifications"><Svg w={15}><path d="M1 2h13v10H9l-2 2-2-2H1z" stroke="#fff" /></Svg></ToolButton>
          <PeekEdge />
        </Tray>
      </Taskbar>
    </Shell>
  );
}
